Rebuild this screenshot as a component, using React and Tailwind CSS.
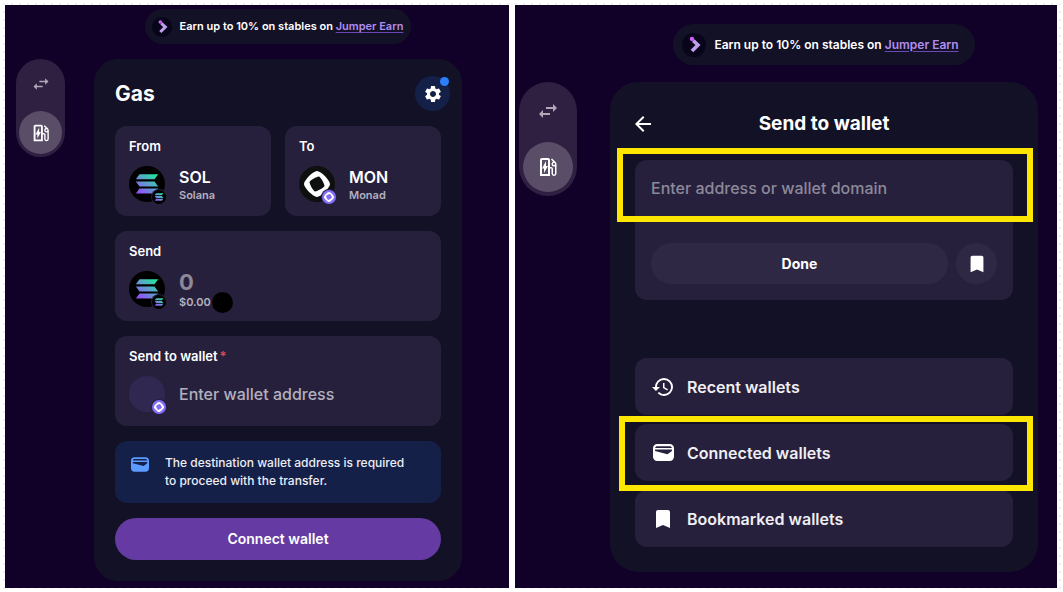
import React, { useState } from 'react';
import { MdSettings, MdBookmark, MdHistory, MdArrowBack, MdOutlineEvStation } from 'react-icons/md';

const SwapIcon = ({ className }) => (
    <svg viewBox="0 0 24 24" fill="currentColor" className={className} aria-hidden="true">
        <path d="M6.99 11 3 15l3.99 4v-3H14v-2H6.99v-3ZM21 9l-3.99-4v3H10v2h7.01v3L21 9Z" />
    </svg>
);

const WalletIcon = ({ className }) => (
    <svg viewBox="0 0 20 16" fill="currentColor" className={className} aria-hidden="true">
        <path
            fillRule="evenodd"
            d="M4 0h12a4 4 0 0 1 4 4v8a4 4 0 0 1-4 4H4a4 4 0 0 1-4-4V4a4 4 0 0 1 4-4Zm0 2C3 2 2.200 2.600 2 3.600h16C17.800 2.600 17 2 16 2H4ZM2 5.200v1.300l10.800 3c.700.200 1.400 0 2-.500L18 6.500V5.200H2Z"
        />
    </svg>
);

const SolanaLogo = ({ className }) => (
    <svg viewBox="0 0 36 36" className={className} aria-hidden="true">
        <defs>
            <linearGradient id="sol" x1="27" y1="7" x2="10" y2="29" gradientUnits="userSpaceOnUse">
                <stop offset="0" stopColor="#14f195" />
                <stop offset="0.45" stopColor="#5aa5c8" />
                <stop offset="1" stopColor="#9945ff" />
            </linearGradient>
        </defs>
        <circle cx="18" cy="18" r="18" fill="#000" />
        <g fill="url(#sol)">
            <path d="M10.500 8.200H29.200l-3.700 5H6.800Z" />
            <path d="M6.800 15.400H25.500l3.700 5H10.500Z" />
            <path d="M10.500 22.600H29.200l-3.700 5H6.800Z" />
        </g>
    </svg>
);

const MonadLogo = ({ className, background }) => (
    <svg viewBox="0 0 36 36" className={className} aria-hidden="true">
        <circle cx="18" cy="18" r="18" fill={background} />
        <path
            fill="#fff"
            fillRule="evenodd"
            transform="translate(5 5) scale(.1436)"
            d="M90.500 0C64.400 0 0 64.400 0 90.500S64.400 181 90.500 181 181 116.600 181 90.500 116.600 0 90.500 0ZM76.400 142.300C65.400 139.300 35.700 87.400 38.700 76.400 41.700 65.400 93.600 35.700 104.600 38.700c11 3 40.700 54.900 37.700 65.900-3 11-54.900 40.700-65.900 37.700Z"
        />
    </svg>
);

const JumperLogo = ({ className }) => (
    <svg viewBox="0 0 20 20" className={className} aria-hidden="true">
        <circle cx="10" cy="10" r="10" fill="#08051a" />
        <path d="m9.400 6.400 3.900 3.600-5 5" fill="none" stroke="#bea0eb" strokeWidth="3" />
        <circle cx="8.300" cy="5" r="1.800" fill="#d35cff" />
    </svg>
);

const Avatar = ({ children, badge }) => (
    <div className="relative size-9 shrink-0">
        {children}
        <span className="absolute -right-[2px] -bottom-[3px] rounded-full bg-[#27203d] p-px">{badge}</span>
    </div>
);

const monadBadge = <MonadLogo className="size-[14px]" background="#836ef9" />;
const solanaBadge = <SolanaLogo className="size-[14px]" />;

const Field = ({ label, required, children }) => (
    <div className="h-[90px] rounded-xl bg-[#27203d] px-[14px] pt-[11px]">
        <div className="mb-[11px] text-[13px] leading-[18px] font-semibold text-white">
            {label}
            {required && <span className="ml-[2px] text-[#e5484d]">*</span>}
        </div>
        <div className="flex h-9 items-center gap-[14px]">{children}</div>
    </div>
);

const Token = ({ symbol, chain }) => (
    <div className="pt-[3px]">
        <div className="text-base leading-[18px] font-semibold text-white">{symbol}</div>
        <div className="text-[11px] leading-[18px] font-semibold text-[#b3b0bd]">{chain}</div>
    </div>
);

const wallets = [
    { name: 'Recent wallets', icon: <MdHistory className="size-6" /> },
    { name: 'Connected wallets', icon: <WalletIcon className="h-[17px] w-[21px]" />, marked: true },
    { name: 'Bookmarked wallets', icon: <MdBookmark className="size-6" /> },
];

const GasScreen = () => {
    const [amount, setAmount] = useState('');
    const [address, setAddress] = useState('');

    return (
        <section className="grid grid-cols-[49px_minmax(0,1fr)] content-start gap-x-[29px] gap-y-[15px] bg-[#110027] pt-1 pr-[47px] pb-[7px] pl-[11px]">
            <div className="col-start-2 flex h-[35px] items-center gap-2 justify-self-center rounded-full bg-[#131126] pr-2 pl-[7px] text-[11px] font-semibold text-white">
                <JumperLogo className="size-5" />
                <p>
                    Earn up to 10% on stables on{' '}
                    <a href="#earn" className="text-[#b08df0] underline decoration-[#6d48b4] underline-offset-2">Jumper Earn</a>
                </p>
            </div>

            <nav className="flex flex-col items-center gap-[6px] self-start rounded-full bg-[#2f1f41] p-[3px]">
                <button aria-label="Exchange" className="flex size-[43px] items-center justify-center rounded-full text-[#b0a8b9]">
                    <SwapIcon className="size-5" />
                </button>
                <button aria-label="Gas" className="flex size-[43px] items-center justify-center rounded-full bg-[#594d67] text-white">
                    <MdOutlineEvStation className="size-[22px]" />
                </button>
            </nav>

            <main className="flex flex-col gap-[15px] rounded-[24px] bg-[#131126] px-[21px] pt-[17px] pb-[21px]">
                <header className="flex items-center justify-between">
                    <h1 className="text-[21px] leading-7 font-bold text-white">Gas</h1>
                    <button aria-label="Settings" className="relative -mr-[9px] flex size-[35px] items-center justify-center rounded-full bg-[#152049] text-white">
                        <MdSettings className="size-5" />
                        <span className="absolute top-px right-px size-[9px] rounded-full bg-[#2b7fff]" />
                    </button>
                </header>

                <div className="grid grid-cols-2 gap-[14px]">
                    <Field label="From">
                        <Avatar badge={solanaBadge}>
                            <SolanaLogo className="size-9" />
                        </Avatar>
                        <Token symbol="SOL" chain="Solana" />
                    </Field>
                    <Field label="To">
                        <Avatar badge={monadBadge}>
                            <MonadLogo className="size-9" background="#0e100f" />
                        </Avatar>
                        <Token symbol="MON" chain="Monad" />
                    </Field>
                </div>

                <Field label="Send">
                    <Avatar badge={solanaBadge}>
                        <SolanaLogo className="size-9" />
                    </Avatar>
                    <div className="min-w-0 flex-1 pt-[3px]">
                        <input
                            aria-label="Amount to send"
                            placeholder="0"
                            value={amount}
                            onChange={(e) => setAmount(e.target.value)}
                            className="block h-6 w-full text-[22px] leading-6 font-bold text-white outline-none placeholder:text-[#8d8999]"
                        />
                        <div className="flex h-[18px] items-center gap-px text-[11px] font-semibold text-[#b3b0bd]">
                            $0.00
                            <span className="size-[21px] rounded-full bg-black" />
                        </div>
                    </div>
                </Field>

                <Field label="Send to wallet" required>
                    <Avatar badge={monadBadge}>
                        <div className="size-9 rounded-full bg-[#302850]" />
                    </Avatar>
                    <input
                        aria-label="Send to wallet"
                        placeholder="Enter wallet address"
                        value={address}
                        onChange={(e) => setAddress(e.target.value)}
                        className="min-w-0 flex-1 text-base font-medium text-white outline-none placeholder:text-[#b3b0bd]"
                    />
                </Field>

                <div className="flex gap-4 rounded-xl bg-[#152049] px-4 py-[13px] text-xs leading-[18px] font-medium text-[#eceef4]">
                    <WalletIcon className="mt-[3px] h-[15px] w-[18px] shrink-0 text-[#5c9bff]" />
                    <p>
                        The destination wallet address is required
                        <br />
                        to proceed with the transfer.
                    </p>
                </div>

                <button className="h-[42px] rounded-full bg-[#653ba3] text-sm font-semibold text-white">Connect wallet</button>
            </main>
        </section>
    );
};

const WalletScreen = () => {
    const [address, setAddress] = useState('');

    return (
        <section className="grid grid-cols-[58px_minmax(0,1fr)] content-start gap-x-[33px] gap-y-[17px] bg-[#110027] pt-[19px] pr-[19px] pb-4 pl-1">
            <div className="col-start-2 flex h-[41px] items-center gap-2 justify-self-center rounded-full bg-[#131126] pr-4 pl-[9px] text-xs font-semibold text-white">
                <JumperLogo className="size-6" />
                <p>
                    Earn up to 10% on stables on{' '}
                    <a href="#earn" className="text-[#b08df0] underline decoration-[#6d48b4] underline-offset-2">Jumper Earn</a>
                </p>
            </div>

            <nav className="flex flex-col items-center gap-[6px] self-start rounded-full bg-[#2f1f41] p-1">
                <button aria-label="Exchange" className="flex size-[50px] items-center justify-center rounded-full text-[#b0a8b9]">
                    <SwapIcon className="size-6" />
                </button>
                <button aria-label="Gas" className="flex size-[50px] items-center justify-center rounded-full bg-[#594d67] text-white">
                    <MdOutlineEvStation className="size-6" />
                </button>
            </nav>

            <main className="rounded-[28px] bg-[#131126] p-[25px]">
                <header className="mb-5 grid h-[33px] grid-cols-[24px_1fr_24px] items-center">
                    <button aria-label="Back" className="-ml-1 text-white">
                        <MdArrowBack className="size-6" />
                    </button>
                    <h2 className="text-center text-[19px] leading-8 font-bold text-white">Send to wallet</h2>
                </header>

                <div className="relative mb-[58px] rounded-xl bg-[#27203d] p-4">
                    <div className="pointer-events-none absolute -top-3 -right-5 -left-[18px] h-[74px] border-6 border-[#ffe600]" />
                    <input
                        aria-label="Wallet address"
                        placeholder="Enter address or wallet domain"
                        value={address}
                        onChange={(e) => setAddress(e.target.value)}
                        className="mb-[43px] block h-6 w-full text-base font-medium text-white outline-none placeholder:text-[#8d8999]"
                    />
                    <div className="flex gap-2">
                        <button className="h-[41px] flex-1 rounded-full bg-[#2f2845] text-sm font-bold text-white">Done</button>
                        <button aria-label="Bookmark" className="flex size-[41px] items-center justify-center rounded-full bg-[#2f2845] text-white">
                            <MdBookmark className="size-[22px]" />
                        </button>
                    </div>
                </div>

                <div className="flex flex-col gap-[9px]">
                    {wallets.map((wallet) => (
                        <button
                            key={wallet.name}
                            className="relative flex h-[57px] items-center gap-3 rounded-xl bg-[#27203d] px-4 text-left text-base font-semibold text-[#efeef2]"
                        >
                            <span className="flex w-6 justify-center text-white">{wallet.icon}</span>
                            {wallet.name}
                            {wallet.marked && (
                                <span className="pointer-events-none absolute -top-2 -right-5 -bottom-[10px] -left-4 z-10 border-6 border-[#ffe600]" />
                            )}
                        </button>
                    ))}
                </div>
            </main>
        </section>
    );
};

const App = () => {
    return (
        <div className="grid min-h-screen grid-cols-[minmax(0,504fr)_minmax(0,542fr)] gap-[6px] bg-white bg-[radial-gradient(#f0f0f3_1px,transparent_1px)] bg-size-[8px_8px] pt-[5px] pr-[6px] pb-1 pl-[5px] font-['Inter',sans-serif]">
            <GasScreen />
            <WalletScreen />
        </div>
    );
};

export default App;
